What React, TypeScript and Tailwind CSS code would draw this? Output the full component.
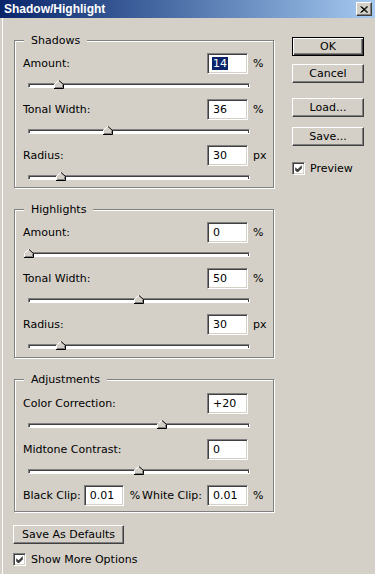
import React from "react";

const raised =
  "bg-[#d4d0c8] border border-t-white border-l-white border-r-[#404040] border-b-[#404040] shadow-[inset_-1px_-1px_0_#808080]";
const sunken =
  "bg-white border border-t-[#808080] border-l-[#808080] border-r-white border-b-white shadow-[inset_1px_1px_0_#404040,inset_-1px_-1px_0_#d4d0c8]";

type Control = {
  label: string;
  value: string;
  unit: string;
  thumb: string; // left offset class of the slider thumb
  selected?: boolean;
};

const shadows: Control[] = [
  { label: "Amount:", value: "14", unit: "%", thumb: "left-[25px]", selected: true },
  { label: "Tonal Width:", value: "36", unit: "%", thumb: "left-[74px]" },
  { label: "Radius:", value: "30", unit: "px", thumb: "left-[27px]" },
];

const highlights: Control[] = [
  { label: "Amount:", value: "0", unit: "%", thumb: "-left-[5px]" },
  { label: "Tonal Width:", value: "50", unit: "%", thumb: "left-[105px]" },
  { label: "Radius:", value: "30", unit: "px", thumb: "left-[27px]" },
];

const adjustments: Control[] = [
  { label: "Color Correction:", value: "+20", unit: "", thumb: "left-[128px]" },
  { label: "Midtone Contrast:", value: "0", unit: "", thumb: "left-[105px]" },
];

function Thumb({ pos }: { pos: string }) {
  return (
    <svg
      width="10"
      height="9"
      viewBox="0 0 10 9"
      className={`absolute -top-[4px] ${pos}`}
    >
      <polygon points="0.5,8.5 0.5,4 5,0.5 9.5,4 9.5,8.5" fill="#d4d0c8" />
      <polyline points="0.5,8 0.5,4 5,0.5" fill="none" stroke="#fff" />
      <polyline points="5,0.5 9.5,4.5 9.5,8.5 0,8.5" fill="none" stroke="#000" />
      <polyline points="8.5,4.8 8.5,7.5 1,7.5" fill="none" stroke="#808080" />
    </svg>
  );
}

function Field({ value, selected, w = "w-[41px]" }: { value: string; selected?: boolean; w?: string }) {
  return (
    <div className={`${sunken} ${w} h-[21px] flex items-center pl-[5px]`}>
      {selected ? (
        <span className="bg-[#0a246a] text-white px-[1px] -ml-[1px] leading-[13px]">{value}</span>
      ) : (
        <span>{value}</span>
      )}
    </div>
  );
}

function Slider({ c }: { c: Control }) {
  return (
    <div>
      <div className="flex items-center h-[21px] pl-[8px]">
        <span className="flex-1">{c.label}</span>
        <Field value={c.value} selected={c.selected} />
        <span className="w-[25px] pl-[5px]">{c.unit}</span>
      </div>
      <div className="relative mt-[9px] ml-[13px] w-[222px] h-[5px] bg-white border border-t-[#808080] border-l-[#808080] border-r-white border-b-white shadow-[inset_1px_1px_0_#404040,inset_-1px_0_0_#404040]">
        <Thumb pos={c.thumb} />
      </div>
    </div>
  );
}

function Group({ title, pad, children }: { title: string; pad: string; children: React.ReactNode }) {
  return (
    <div
      className={`relative w-[260px] border border-[#808080] shadow-[1px_1px_0_#fff,inset_1px_1px_0_#fff] flex flex-col gap-[11px] ${pad}`}
    >
      <span className="absolute -top-[7px] left-[9px] px-[7px] bg-[#d4d0c8] leading-[13px]">
        {title}
      </span>
      {children}
    </div>
  );
}

function Check({ label }: { label: string }) {
  return (
    <div className="flex items-center h-[13px]">
      <div className={`${sunken} w-[13px] h-[13px] flex items-center justify-center`}>
        <svg width="7" height="7" viewBox="0 0 7 7">
          <path d="M0 2.5 L2.5 5 L7 0.5 M0 3.5 L2.5 6 L7 1.5 M0 4.5 L2.5 7 L7 2.5" stroke="#000" strokeWidth="1" fill="none" />
        </svg>
      </div>
      <span className="ml-[5px]">{label}</span>
    </div>
  );
}

function Button({ label, def, w = "w-[72px]" }: { label: string; def?: boolean; w?: string }) {
  if (def) {
    return (
      <div className={`${w} h-[19px] border border-black bg-[#d4d0c8] shadow-[inset_1px_1px_0_#fff,inset_-1px_-1px_0_#404040,inset_-2px_-2px_0_#808080] flex items-center justify-center`}>
        {label}
      </div>
    );
  }
  return <div className={`${raised} ${w} h-[19px] flex items-center justify-center`}>{label}</div>;
}

export default function App() {
  return (
    <div className="w-[375px] h-[574px] overflow-hidden bg-[#d4d0c8] text-black text-[11px] leading-[13px] font-['Tahoma','DejaVu_Sans',sans-serif]">
      {/* title bar */}
      <div className="h-[18px] flex items-center justify-between bg-gradient-to-r from-[#0a246a] to-[#a6caf0]">
        <span className="pl-[4px] text-white font-bold text-[12px] font-['Liberation_Sans',Arial,sans-serif]">
          Shadow/Highlight
        </span>
        <div className={`${raised} w-[16px] h-[14px] mr-[3px] flex items-center justify-center`}>
          <svg width="8" height="7" viewBox="0 0 8 7">
            <path d="M0.5 0.5 L7 6.5 M1.5 0.5 L8 6.5 M7 0.5 L0.5 6.5 M8 0.5 L1.5 6.5" stroke="#000" fill="none" />
          </svg>
        </div>
      </div>

      <div className="ml-[2px] h-[556px] border-l border-white pl-[11px] pt-[19px] flex items-start">
        <div className="pt-[3px] flex flex-col">
          <Group title="Shadows" pad="pt-[12px] pb-[7px]">
            {shadows.map((c) => (
              <Slider key={c.label} c={c} />
            ))}
          </Group>
          <div className="mt-[21px]">
            <Group title="Highlights" pad="pt-[12px] pb-[8px]">
              {highlights.map((c) => (
                <Slider key={c.label} c={c} />
              ))}
            </Group>
          </div>
          <div className="mt-[21px]">
            <Group title="Adjustments" pad="pt-[13px] pb-[5px]">
              {adjustments.map((c) => (
                <Slider key={c.label} c={c} />
              ))}
              <div className="flex items-center h-[21px] pl-[8px]">
                <span>Black Clip:</span>
                <div className="ml-[3px]">
                  <Field value="0.01" w="w-[40px]" />
                </div>
                <span className="ml-[6px]">%</span>
                <span className="ml-auto mr-[5px]">White Clip:</span>
                <Field value="0.01" />
                <span className="w-[25px] pl-[5px]">%</span>
              </div>
            </Group>
          </div>
          <div className="mt-[13px] -ml-[1px]">
            <Button label="Save As Defaults" w="w-[111px]" />
          </div>
          <div className="mt-[9px] -ml-[1px]">
            <Check label="Show More Options" />
          </div>
        </div>

        <div className="ml-[18px] w-[72px] flex flex-col">
          <Button label="OK" def />
          <div className="mt-[8px]">
            <Button label="Cancel" />
          </div>
          <div className="mt-[15px]">
            <Button label="Load..." />
          </div>
          <div className="mt-[10px]">
            <Button label="Save..." />
          </div>
          <div className="mt-[16px]">
            <Check label="Preview" />
          </div>
        </div>
      </div>
    </div>
  );
}
